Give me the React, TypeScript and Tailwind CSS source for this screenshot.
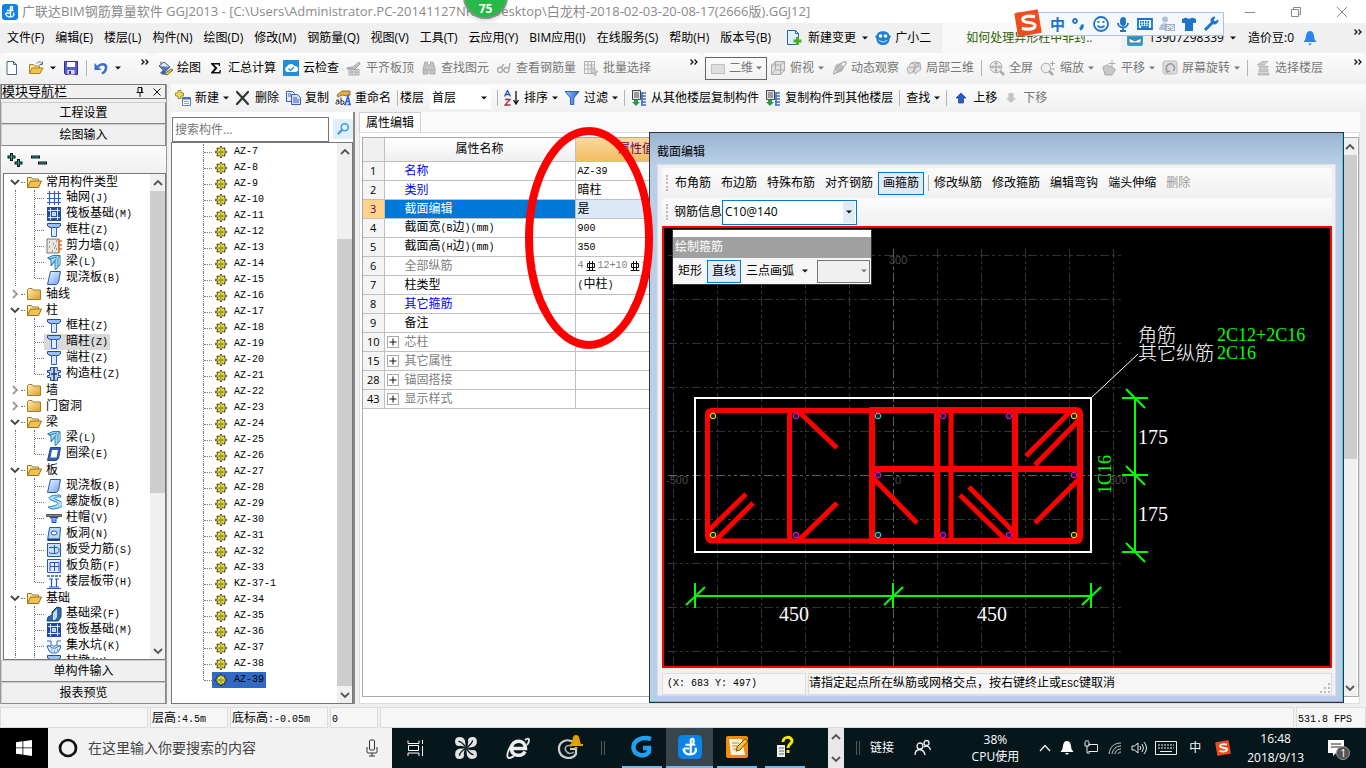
import React from "react";
import type { ReactNode } from "react";

const art: Record<string, ReactNode> = {
  app: (
    <>
      <rect width="16" height="16" rx="3" fill="#0a84e8" />
      <path d="M8.500 12.500V3.500q0-1 1-1t1 1.500-1 1.500M5 6.500h6.500M4 9h3.500M11.500 8.500c1.500 3-1 4.500-3.500 4.500S4 12 3.500 9" fill="none" stroke="#fff" strokeWidth="1.400" />
    </>
  ),
  page: <path d="M3 1.500h6.500l3 3v10H3zM9.500 1.500v3h3" fill="#fff" stroke="#50658c" />,
  folderOpen: (
    <>
      <path d="M1.500 13V3.500h4l1 1.500h6v2" fill="#fbe9a0" stroke="#9a7a2c" />
      <path d="M1.500 13.500 4.500 7h11l-3 6.500z" fill="#f3c14c" stroke="#9a6f1e" />
    </>
  ),
  fileOpen: (
    <>
      <path d="M1.500 13V4.500h4l1 1.500h5v2" fill="#fbe9a0" stroke="#b07f24" />
      <path d="M1.500 13.500 4 8h11l-3 5.500z" fill="#f3c14c" stroke="#b07f24" />
      <path d="M8.500 3.500c2-2.500 4.500-2 5.500.5m.5-2.500v3h-3" fill="none" stroke="#50708c" />
    </>
  ),
  folder: <path d="M1.500 13.500v-10l1-1h3.500l1 1.500h7.500v9.500z" fill="url(#gold)" stroke="#a87d28" />,
  save: (
    <>
      <path d="M1.500 1.500h13v13h-12l-1-1z" fill="#5a5fd0" stroke="#2c2f90" />
      <path d="M4 2h8v5H4z" fill="#fff" />
      <path d="M4.500 10h7v4.500h-7z" fill="#dcdcec" />
      <path d="M6 11h2v3H6z" fill="#2c2f90" />
    </>
  ),
  undo: (
    <>
      <path d="M5 6.500c4-4 9-2 8 2-.4 2.500-2 4-4 5" fill="none" stroke="#3d6fd0" strokeWidth="2.500" />
      <path d="M1.500 3v7h7z" fill="#3d6fd0" />
    </>
  ),
  paint: (
    <>
      <path d="m2 6 5-4 6 5-5 5z" fill="#e6ecf5" stroke="#44597c" />
      <path d="M4 4V1.500" stroke="#44597c" />
      <path d="M2 6 8 6.500 13 7 8 12z" fill="#5a78b8" />
      <path d="m7 14 7-5 2 1-6 5z" fill="#eac53c" stroke="#6a6a40" />
      <path d="m3 13 3-3 3 3-3 2z" fill="#3e63a8" />
    </>
  ),
  sigma: <path d="M3 3h9v3h-1l-.5-1.500H6l3.500 3.500L6 12h5l1-2h1l-.5 3.500H3v-1L6.800 8 3 4z" fill="#111" />,
  cloud: (
    <>
      <rect width="16" height="16" fill="#1e8fd8" />
      <path d="M4 12a3 3 0 0 1 0-5.500 4.200 4.200 0 0 1 7.500-.5A3 3 0 0 1 12.500 12z" fill="#fff" />
      <path d="m5.500 8.500 2 2 3.500-3.500" fill="none" stroke="#1e8fd8" strokeWidth="1.300" />
    </>
  ),
  slab: (
    <>
      <path d="m1 8 6-1 6-5 1 2-5 5H1z" fill="#c4c4c4" stroke="#a0a0a0" />
      <path d="M3 9.500h10V15H3zM6 9.500V15m4-5.500V15M3 12h10" fill="#ddd" stroke="#aaa" />
    </>
  ),
  binoc: <path d="M4 2h2.500v3h3V2H12l2 7v5H9v-4H7v4H2V9zM3 10h3m4 0h3" fill="#c4c4c4" stroke="#aaa" />,
  glasses: (
    <g fill="none" stroke="#a8a8a8" strokeWidth="1.300">
      <circle cx="4" cy="10" r="2.500" />
      <circle cx="10.500" cy="10" r="2.500" />
      <path d="M6.500 10H8M5 7.500 8 4m5 5 1-6" />
    </g>
  ),
  batch: (
    <>
      <path d="M1.500 1.500h10v12h-10zM1.500 5h10M1.500 9h10M5 1.500v12M8.500 1.500v12" fill="none" stroke="#b0b0b0" />
      <path d="m8 6 7 6-3 .5 1.500 2.500-1.500.5-1.500-2.500L8 14z" fill="#ccc" stroke="#999" strokeWidth=".6" />
    </>
  ),
  flat: <path d="M1.500 4.500h13v9h-13z" fill="#dedede" stroke="#c0c0c0" />,
  cube: (
    <>
      <path d="m1.500 5 4-3.500h9v9l-4 4h-9z" fill="#e2e2e2" stroke="#aaa" />
      <path d="M1.500 5h9v9.500M10.500 5l4-3.500M5.500 2v8h9M5.500 10l-4 4" fill="none" stroke="#aaa" />
    </>
  ),
  orbit: (
    <>
      <circle cx="8" cy="8" r="4.500" fill="#c0c0c0" />
      <path d="M3 14C1 11 12 0 15 2c1 2-6 10-12 12z" fill="none" stroke="#aaa" strokeWidth="1.300" />
    </>
  ),
  local3d: (
    <g fill="#e2e2e2" stroke="#aaa">
      <path d="m1 9 4-6 4 1-1 7-5 3z" />
      <path d="m9 4 5-1 1 6-6 5-1-3z" />
      <path d="m5 3 4-1 5 1M3 8l11-2M6 13l7-9" fill="none" />
    </g>
  ),
  full: (
    <>
      <circle cx="7" cy="7" r="5.800" fill="#eee" stroke="#aaa" />
      <path d="M7 2.500v9M2.500 7h9M5.500 4 7 2.500 8.500 4m-3 6L7 11.500 8.500 10M4 5.500 2.500 7 4 8.500m6-3L11.500 7 10 8.500" fill="none" stroke="#999" />
      <path d="m11 11 4 4" stroke="#aaa" strokeWidth="2.500" />
    </>
  ),
  zoom: (
    <>
      <circle cx="6" cy="8" r="4.800" fill="#eee" stroke="#aaa" />
      <path d="m9 11 4 4" stroke="#aaa" strokeWidth="2.500" />
      <path d="M12.500 1v5M10 3.500h5M11 9h4" stroke="#aaa" />
    </>
  ),
  pan: (
    <>
      <path d="M2 7c2-1 3-2 5-2l5 3 2 1c0 3-2 4-3 6H4c0-3-2-5-2-8z" fill="#c8c8c8" stroke="#aaa" />
      <path d="M11 0v7M7.500 3.500h7" stroke="#aaa" />
    </>
  ),
  rotate: (
    <>
      <rect x="1" y="1" width="14" height="13" rx="2" fill="#ddd" stroke="#bbb" />
      <path d="M5 10a4 4 0 1 1 6 1M4 9l1 3 3-1" fill="none" stroke="#999" strokeWidth="1.500" />
    </>
  ),
  floors: <path d="m2 5 5-3.500h6L9 5zM4 6h9v2H4zM4 9.500h9v2H4zM3 13h11v2H3z" fill="#ccc" stroke="#aaa" strokeWidth=".7" />,
  create: (
    <>
      <path d="M3 .5h3v2.500h2.500v3H6v2.500H3V6H.5V3H3z" fill="#f6dc50" stroke="#8a7a20" strokeWidth=".8" />
      <path d="M7.500 7.500h8v8h-8z" fill="#fff" stroke="#6080b0" />
      <path d="M7.500 7.500h8v2h-8z" fill="#3c6cc0" />
      <path d="M9 11.500h5M9 13.500h5" stroke="#90a8cc" />
    </>
  ),
  cross: <path d="m2 2 11 12M13 2 2 14" stroke="#333" strokeWidth="2.200" strokeLinecap="round" />,
  copy: (
    <g stroke="#3a62b0">
      <path d="M1.500 1.500h6l2 2v8h-8z" fill="#e4edfb" />
      <path d="M6.500 4.500h6l3 3v7h-9z" fill="#cfe0fa" />
      <path d="M3 4h3M3 6h3M8 8h4M8 10h6M8 12h6" />
    </g>
  ),
  rename: (
    <>
      <path d="m2 5 5-4h8v4l-3 1-5-1-4 2z" fill="#e2b23c" stroke="#7a5a1a" strokeWidth=".8" />
      <path d="M1 10.500q3-1.500 3 .5v3m0-2.500c-4 0-4 3-1.500 2.500L4 13M6 7.500v7q3 0 3-2t-3-2" fill="none" stroke="#333" />
      <path d="M9 14.500h2.500m1 0H16M10 14.500 13 6l2 8.500M11 11.500h3.500" fill="none" stroke="#3264c8" strokeWidth="1.500" />
    </>
  ),
  sort: (
    <>
      <path d="M.5 6.500 3.500.5l3 6M2 4.500h3.500" fill="none" stroke="#2c50b0" strokeWidth="1.300" />
      <path d="M1 9.500h5l-5 5.500h5.500" fill="none" stroke="#a03048" strokeWidth="1.300" />
      <path d="M12 1v12m-2.500-3 2.500 4 2.500-4" fill="none" stroke="#111" strokeWidth="1.300" />
    </>
  ),
  filter: <path d="M1 1.500h14L9.800 8v6.500H6.500V8z" fill="url(#blue)" stroke="#2e62c0" />,
  floorCopy: (
    <>
      <path d="M1.500.5h8v9h-8z" fill="#e4e4e4" stroke="#444" />
      <path d="M3 3h5M3 5h5M3 7h5" stroke="#555" />
      <path d="M3 9.500h4v2.500h2l-4 4-4-4h2z" fill="#2a9a48" />
      <path d="M11 3h4M10 6h5M10 9h5M10 12h5M10 15h5M11 2v13" stroke="#3c72c8" strokeWidth="1.600" />
    </>
  ),
  up: <path d="m8 3 5 5h-2.500v5h-5V8H3z" fill="#2a5cc8" stroke="#183c90" strokeWidth=".7" />,
  down: <path d="m8 13 5-5h-2.500V3h-5v5H3z" fill="#c4c4c4" />,
  newChange: (
    <>
      <path d="M1.500.5h8l3 3v11h-11z" fill="#dff0fc" stroke="#28689c" />
      <path d="M9.500.5v3h3" fill="none" stroke="#28689c" />
      <path d="M10 7h3v2.500h2.500v3H13V15h-3v-2.500H7.500v-3H10z" fill="#4cae22" />
    </>
  ),
  robot: (
    <>
      <path d="M2 5C2 0 14 0 14 5l2 1-1.500 3c0 8-13 8-13 0L0 6z" fill="#1f7fd0" />
      <circle cx="5.500" cy="6" r="1.800" fill="#fff" />
      <circle cx="10.500" cy="6" r="1.800" fill="#fff" />
      <path d="M4 10c2 2.500 6 2.500 8 0" fill="none" stroke="#bfe2ff" strokeWidth="1.200" />
    </>
  ),
  mail: (
    <>
      <rect width="16" height="16" rx="2" fill="#3a9ccc" />
      <path d="M2 8h12v5H2zl6 3 6-3" fill="#fff" stroke="#3a7898" />
    </>
  ),
  bell: (
    <>
      <path d="M8 1c4 0 4 5 4.500 8l2 3h-13l2-3C4 6 4 1 8 1z" fill="#2a86e8" />
      <path d="M6 13.500h4L8 15.500z" fill="#2a86e8" />
    </>
  ),
  search: (
    <>
      <circle cx="10" cy="6" r="4" fill="#eaf6ff" stroke="#3aa0e0" strokeWidth="1.800" />
      <path d="M7 9 2 14" stroke="#3aa0e0" strokeWidth="2.500" />
    </>
  ),
  grid: <path d="M3.500 1v14M8.500 1v14M12.500 1v14M1 3.500h14M1 8.500h14M1 12.500h14" fill="none" stroke="#2f5cc0" strokeWidth="1.200" />,
  raft: (
    <>
      <rect x="1" y="1" width="14" height="14" fill="#1f4ea0" />
      <path d="M2 4.500h12M2 11.500h12M4.500 2v12M11.500 2v12M6.500 6.500h3v3h-3z" stroke="#dce9fa" fill="#a8c4ec" />
    </>
  ),
  column: (
    <>
      <path d="M1.500 1.500h13V4L12 5.500H4L1.500 4z" fill="#9cc0f4" stroke="#1f4ea8" />
      <path d="M5.500 5.500h5v9h-5z" fill="#dcebff" stroke="#2f62c8" />
    </>
  ),
  wall: (
    <>
      <path d="M1 1h12v14H1z" fill="#e8e4e0" stroke="#777" />
      <path d="M3 4h1m3 2h1m2-3h1M3 9h1m4 1h1m-3 3h1m3-2h1M9 8h1" stroke="#555" />
      <path d="M13 1v14M13 3h3M13 7h3M13 11h3" stroke="#e07028" strokeWidth="1.400" />
    </>
  ),
  beam: (
    <>
      <path d="M1.500 4 7 1.500h7l-2 3v9l-3 2V7L5 12V6z" fill="#a8d8f4" stroke="#2880b8" />
      <path d="m3 5 8-2M12 4l2-2v9l-2 2M5 12l5-7" fill="none" stroke="#2880b8" />
    </>
  ),
  plate: <path d="M4.500 1.500h10l-2 11-2 2h-9z" fill="url(#blue2)" stroke="#2458b8" />,
  ring: (
    <>
      <path d="M4.500 1.500h10l-2 11-2 2h-9z" fill="#2f60b8" stroke="#1f4898" />
      <path d="M6 4h6l-1.500 7.500h-6z" fill="#fff" />
    </>
  ),
  struct: (
    <>
      <path d="M4.500 1.500h7v3h3v2h-2v3h2v2h-3v3h-7v-3h-3v-2h2v-3h-2v-2h3z" fill="#b8d0f4" stroke="#1f4898" />
      <path d="M8 2v12M5 8h6" stroke="#1f3878" strokeWidth="1.500" />
    </>
  ),
  spiral: <path d="M14 1C3 1 1 4 5 6l5 2c4 1 1 4-8 5l3 2c12 0 14-5 9-8L9 5c-2-1 1-2 6-2z" fill="#a8dcfa" stroke="#2a80c0" />,
  cap: (
    <>
      <path d="M.5 4.500h15v2H.5z" fill="#888" stroke="#555" />
      <path d="M4 7.500h8l-2 2v3H6v-3z" fill="#78a8f0" stroke="#1f4ea8" />
    </>
  ),
  hole: (
    <>
      <path d="M3.500 1.500h11l-1 13h-12z" fill="#bcd6fa" stroke="#2458b8" />
      <ellipse cx="8" cy="7" rx="3" ry="2" fill="#fff" stroke="#2458b8" />
      <path d="M2 13.500h12" stroke="#183c80" strokeWidth="2" />
    </>
  ),
  rebar: (
    <>
      <path d="M1.500 1.500h13v13h-13z" fill="#c8dcfa" stroke="#2458b8" />
      <path d="M3 5.500h8q2 0 2 3t-5 3-5-1M8.500 3v9" fill="none" stroke="#2458b8" />
    </>
  ),
  neg: (
    <>
      <path d="M1.500 1.500h13v13h-13z" fill="#e2ecfc" stroke="#2458b8" />
      <path d="M4 8.500h9M8.500 4v9M4 13V4.500h9V13" fill="none" stroke="#2458b8" />
    </>
  ),
  band: (
    <>
      <path d="M1 2h14" stroke="#2458b8" strokeWidth="1.500" strokeDasharray="3 1" />
      <path d="M3 5h4M9 5h4M5.500 5v8m5-8v8M3 13h10M1 14.500h14" stroke="#2458b8" strokeWidth="1.200" />
    </>
  ),
  fbeam: (
    <>
      <path d="m1 15 1-4 4-2V6l5-5 4 1v9l-3 4z" fill="#2f6cb0" stroke="#183c70" />
      <path d="m7 7 4-4v8l-2 3H7z" fill="#c4e0fa" />
    </>
  ),
  pit: (
    <>
      <path d="M1 3h4v4l2 1h2l2-1V3h4M1 8h4m6 0h4" fill="none" stroke="#2a68c0" />
      <path d="M1 8h3l2 2h4l2-2h3l-2 5-3 2H6l-3-2z" fill="#d4e8fc" stroke="#2a68c0" />
      <path d="M5 12h1m2 1h1m2-1h1" stroke="#2a68c0" />
    </>
  ),
  gear: (
    <>
      <path d="M8 1.500v13M1.500 8h13M3.500 3.500l9 9m0-9-9 9" stroke="#222" strokeWidth="2.600" />
      <circle cx="8" cy="8" r="5" fill="#222" />
      <path d="M8 2.500v11M2.500 8h11M4.200 4.200l7.600 7.600m0-7.600-7.600 7.600" stroke="#f4ec30" strokeWidth="1.400" />
      <circle cx="8" cy="8" r="3.600" fill="none" stroke="#f4ec30" strokeWidth="1.200" />
      <circle cx="8" cy="8" r="1.300" fill="#fff" stroke="#222" strokeWidth=".7" />
    </>
  ),
  sogou: (
    <>
      <path d="m1 3 12-2 2 12-12 2z" fill="#f04c1c" stroke="#f04c1c" strokeWidth="1.500" strokeLinejoin="round" />
      <path d="M12 4.500c-4-1-7 0-7 1.500 0 2.500 7 1 7 3.500 0 2-4 2.500-7.500 1.500" fill="none" stroke="#fff" strokeWidth="1.800" />
    </>
  ),
};

function Icon({ name, className = "size-4" }: { name: string; className?: string }) {
  return (
    <svg viewBox="0 0 16 16" className={`shrink-0 ${className}`} aria-hidden="true">
      {art[name]}
    </svg>
  );
}

const Caret = ({ dim = false }: { dim?: boolean }) => (
  <svg viewBox="0 0 6 4" className="h-1 w-1.5 shrink-0" aria-hidden="true">
    <path d="M0 .5h6L3 3.500z" fill={dim ? "#777" : "#111"} />
  </svg>
);

const Sep = () => <span className="h-4 w-px shrink-0 bg-[#b4b4b4]" />;

const More = () => (
  <button aria-label="更多" className="mb-3 flex shrink-0">
    <svg viewBox="0 0 8 6" className="h-1.5 w-2">
      <path d="m.5.5 2.500 2.500L.5 5.500m4-5L7 3 4.500 5.500" fill="none" stroke="#111" strokeWidth="1.300" />
    </svg>
  </button>
);

function Tool({ icon, label, off = false, caret = false }: { icon?: string; label: string; off?: boolean; caret?: boolean }) {
  return (
    <button className={`flex shrink-0 items-center gap-1 ${off ? "text-[#777]" : "text-black"}`}>
      {icon && <Icon name={icon} />}
      <span>{label}</span>
      {caret && <Caret dim={off} />}
    </button>
  );
}

/* Latin runs are set in a half-width mono face beside the full-width characters. */
function Mixed({ text }: { text: string }) {
  return (
    <>
      {text.split(/([\x20-\x7e]+)/).map((part, i) =>
        i % 2 ? (
          <span key={i} className="whitespace-pre text-[10px] [font-family:'Liberation_Mono',monospace]">
            {part}
          </span>
        ) : (
          part
        ),
      )}
    </>
  );
}

function Chevron({ dir, className = "" }: { dir: "up" | "down" | "right"; className?: string }) {
  const d = dir === "up" ? "M1 7 5 3l4 4" : dir === "down" ? "m1 3 4 4 4-4" : "m3 1 4 4-4 4";
  return (
    <svg viewBox="0 0 10 10" className={`size-2.5 shrink-0 ${className}`} aria-hidden="true">
      <path d={d} fill="none" stroke="currentColor" strokeWidth="1.800" />
    </svg>
  );
}

function ScrollRail({ before, thumb, after }: { before: string; thumb: string; after: string }) {
  return (
    <div className="flex w-[15px] shrink-0 flex-col bg-[#f0f0f0] text-[#555]">
      <button aria-label="向上滚动" className="flex h-[17px] items-center justify-center">
        <Chevron dir="up" />
      </button>
      <div className="flex min-h-0 flex-1 flex-col">
        <div className={before} />
        <div className={`bg-[#cdcdcd] ${thumb}`} />
        <div className={after} />
      </div>
      <button aria-label="向下滚动" className="flex h-[17px] items-center justify-center">
        <Chevron dir="down" />
      </button>
    </div>
  );
}

const menus = ["文件(F)", "编辑(E)", "楼层(L)", "构件(N)", "绘图(D)", "修改(M)", "钢筋量(Q)", "视图(V)", "工具(T)", "云应用(Y)", "BIM应用(I)", "在线服务(S)", "帮助(H)", "版本号(B)"];

type Group = { name: string; kids?: [string, string][] };
const tree: Group[] = [
  { name: "常用构件类型", kids: [["grid", "轴网(J)"], ["raft", "筏板基础(M)"], ["column", "框柱(Z)"], ["wall", "剪力墙(Q)"], ["beam", "梁(L)"], ["plate", "现浇板(B)"]] },
  { name: "轴线" },
  { name: "柱", kids: [["column", "框柱(Z)"], ["column", "暗柱(Z)"], ["column", "端柱(Z)"], ["struct", "构造柱(Z)"]] },
  { name: "墙" },
  { name: "门窗洞" },
  { name: "梁", kids: [["beam", "梁(L)"], ["ring", "圈梁(E)"]] },
  { name: "板", kids: [["plate", "现浇板(B)"], ["spiral", "螺旋板(B)"], ["cap", "柱帽(V)"], ["hole", "板洞(N)"], ["rebar", "板受力筋(S)"], ["neg", "板负筋(F)"], ["band", "楼层板带(H)"]] },
  { name: "基础", kids: [["fbeam", "基础梁(F)"], ["raft", "筏板基础(M)"], ["pit", "集水坑(K)"], ["column", "柱墩(Y)"]] },
];

const members = [...Array.from({ length: 27 }, (_, i) => `AZ-${i + 7}`), "KZ-37-1", ...Array.from({ length: 6 }, (_, i) => `AZ-${i + 34}`)];

const props: { no: number; name: string; value?: string; tone?: string; group?: boolean }[] = [
  { no: 1, name: "名称", value: "AZ-39", tone: "text-[#0000ff]" },
  { no: 2, name: "类别", value: "暗柱", tone: "text-[#0000ff]" },
  { no: 3, name: "截面编辑", value: "是", tone: "text-white" },
  { no: 4, name: "截面宽(B边)(mm)", value: "900" },
  { no: 5, name: "截面高(H边)(mm)", value: "350" },
  { no: 6, name: "全部纵筋", tone: "text-[#808080]" },
  { no: 7, name: "柱类型", value: "(中柱)" },
  { no: 8, name: "其它箍筋", tone: "text-[#0000ff]" },
  { no: 9, name: "备注" },
  { no: 10, name: "芯柱", tone: "text-[#808080]", group: true },
  { no: 15, name: "其它属性", tone: "text-[#808080]", group: true },
  { no: 28, name: "锚固搭接", tone: "text-[#808080]", group: true },
  { no: 43, name: "显示样式", tone: "text-[#808080]", group: true },
];

function TitleBar() {
  return (
    <header className="flex h-[23px] shrink-0 items-center bg-white pl-0.5 text-[#8a8a8a]">
      <Icon name="app" />
      <h1 className="ml-1 flex-1 truncate whitespace-pre text-[13px]">广联达BIM钢筋算量软件 GGJ2013 - [C:\Users\Administrator.PC-20141127NRHI\Desktop\白龙村-2018-02-03-20-08-17(2666版).GGJ12]</h1>
      <div className="flex gap-[34px] pr-[18px]">
        <button aria-label="最小化">
          <svg viewBox="0 0 12 12" className="size-3"><path d="M1 6.500h10" stroke="#888" /></svg>
        </button>
        <button aria-label="还原">
          <svg viewBox="0 0 12 12" className="size-3" fill="none" stroke="#888"><path d="M1.500 3.500h7v7h-7zM3.500 3V1.500h7v7H9" /></svg>
        </button>
        <button aria-label="关闭">
          <svg viewBox="0 0 12 12" className="size-3"><path d="m1 1 10 10M11 1 1 11" stroke="#888" /></svg>
        </button>
      </div>
    </header>
  );
}

function MenuBar() {
  return (
    <nav className="flex h-[30px] shrink-0 items-center gap-[11px] bg-[#f0f0f0] pl-[7px] pr-1">
      {menus.map((m) => (
        <button key={m} className="shrink-0">{m}</button>
      ))}
      <button className="ml-1 flex shrink-0 items-center gap-1.5">
        <Icon name="newChange" />
        新建变更
        <Caret />
      </button>
      <button className="-ml-1 flex shrink-0 items-center gap-1">
        <Icon name="robot" />
        广小二
      </button>
      <div className="flex h-full flex-1 items-center">
        <a href="#tip" className="h-full flex-1 rounded-sm bg-[#f8f8f8] pl-6 leading-[30px] text-[#2f6000]">如何处理异形柱中非封..</a>
        <button className="ml-1.5 flex items-center gap-1.5">
          <Icon name="mail" />
          13907298339
          <Caret />
        </button>
        <button className="ml-3">造价豆:0</button>
        <button aria-label="通知" className="ml-2 mr-9"><Icon name="bell" /></button>
        <More />
      </div>
    </nav>
  );
}

function MainTools() {
  return (
    <div className="flex h-[30px] shrink-0 items-center bg-[#f0f0f0]">
      <div className="flex h-full w-[152px] shrink-0 items-center rounded bg-linear-to-b from-[#fcfcfc] to-[#f0f0f0] pl-1">
        <button aria-label="新建工程"><Icon name="page" /></button>
        <button aria-label="打开" className="ml-2 flex items-center gap-1.5"><Icon name="fileOpen" /><Caret /></button>
        <button aria-label="保存" className="mx-[7px]"><Icon name="save" /></button>
        <Sep />
        <button aria-label="撤销" className="ml-1.5 mr-5 flex items-center gap-1.5"><Icon name="undo" /><Caret /></button>
        <More />
      </div>
      <div className="flex h-full w-[550px] shrink-0 items-center gap-[7px] rounded bg-linear-to-b from-[#fcfcfc] to-[#f0f0f0] pl-[5px] pr-1">
        <Tool icon="paint" label="绘图" />
        <Tool icon="sigma" label="汇总计算" />
        <Tool icon="cloud" label="云检查" />
        <Tool icon="slab" label="平齐板顶" off />
        <Tool icon="binoc" label="查找图元" off />
        <Tool icon="glasses" label="查看钢筋量" off />
        <Tool icon="batch" label="批量选择" off />
        <span className="flex-1" />
        <More />
      </div>
      <div className="flex h-full flex-1 items-center gap-[7px] rounded bg-linear-to-b from-[#fcfcfc] to-[#f0f0f0] pl-[3px] pr-1">
        <button className="-mr-1 flex h-[23px] w-[62px] items-center justify-between border border-[#666] px-1 text-[#777]">
          <Icon name="flat" />
          二维
          <Caret dim />
        </button>
        <Tool icon="cube" label="俯视" off caret />
        <Tool icon="orbit" label="动态观察" off />
        <Tool icon="local3d" label="局部三维" off />
        <Sep />
        <Tool icon="full" label="全屏" off />
        <Tool icon="zoom" label="缩放" off caret />
        <Tool icon="pan" label="平移" off caret />
        <Tool icon="rotate" label="屏幕旋转" off caret />
        <Sep />
        <Tool icon="floors" label="选择楼层" off />
        <span className="flex-1" />
        <More />
      </div>
    </div>
  );
}

function MemberTools() {
  return (
    <div className="flex h-[27px] shrink-0 items-center gap-1.5 bg-linear-to-b from-[#fcfcfc] to-[#f0f0f0] pl-1">
      <Tool icon="create" label="新建" caret />
      <Tool icon="cross" label="删除" />
      <Tool icon="copy" label="复制" />
      <Tool icon="rename" label="重命名" />
      <Sep />
      <label className="-ml-1 flex items-center gap-1.5">
        楼层
        <span className="relative flex items-center">
          <select defaultValue="首层" className="h-[23px] w-[61px] appearance-none bg-white pl-0.5">
            <option>首层</option>
          </select>
          <span className="pointer-events-none absolute right-1"><Caret /></span>
        </span>
      </label>
      <Sep />
      <Tool icon="sort" label="排序" caret />
      <Tool icon="filter" label="过滤" caret />
      <Sep />
      <Tool icon="floorCopy" label="从其他楼层复制构件" />
      <Tool icon="floorCopy" label="复制构件到其他楼层" />
      <Sep />
      <Tool label="查找" caret />
      <Sep />
      <Tool icon="up" label="上移" />
      <Tool icon="down" label="下移" off />
    </div>
  );
}

const NavButton = ({ children }: { children: ReactNode }) => (
  <button className="h-[22px] shrink-0 border border-t-[#ccc] border-r-[#888] border-b-[#888] border-l-[#ccc] bg-[#f0f0f0]">{children}</button>
);

function NavPanel() {
  return (
    <aside className="flex w-[167px] shrink-0 flex-col border-x border-[#999] bg-[#f0f0f0]">
      <div className="flex h-[15px] shrink-0 items-center border border-[#777] pr-1 text-[13px] leading-[13px]">
        <span className="flex-1">模块导航栏</span>
        <button aria-label="固定" className="mr-[9px]">
          <svg viewBox="0 0 8 10" className="h-2.5 w-2"><path d="M2 .5h4V5M2 .5V5M.5 5.500h7M4 6v4M5.500 1v4" fill="none" stroke="#111" /></svg>
        </button>
        <button aria-label="关闭导航栏">
          <svg viewBox="0 0 8 8" className="size-2"><path d="m.5.5 7 7m0-7-7 7" stroke="#111" /></svg>
        </button>
      </div>
      <div className="mt-[3px] flex min-h-0 flex-1 flex-col">
        <NavButton>工程设置</NavButton>
        <NavButton>绘图输入</NavButton>
        <div className="flex h-[27px] shrink-0 items-center gap-2 bg-linear-to-b from-[#fcfcfc] to-[#f0f0f0] pl-1.5">
          <button aria-label="全部展开">
            <svg viewBox="0 0 16 16" className="size-4" fill="none"><path d="M4.500 1v8M.5 5h8M11.500 7v8m-4-4h8" stroke="#111" strokeWidth="3" /><path d="M4.500 2v6M1.500 5h6m4 3v6m-3-3h6" stroke="#10b0a0" /></svg>
          </button>
          <button aria-label="全部折叠">
            <svg viewBox="0 0 16 16" className="size-4" fill="none"><path d="M0 5h9M7 11h9" stroke="#111" strokeWidth="3" /><path d="M1 5h7m0 6h7" stroke="#10b0a0" /></svg>
          </button>
        </div>
        <div className="ml-0.5 flex min-h-0 flex-1 overflow-hidden border border-[#777] bg-white">
          <ul className="min-w-0 flex-1 overflow-hidden">
            {tree.map((g) => (
              <li key={g.name}>
                <button className="flex h-4 items-center pl-1.5 leading-4">
                  <Chevron dir={g.kids ? "down" : "right"} className={g.kids ? "text-[#444]" : "text-[#999]"} />
                  <span className="mx-px w-1 border-t border-dotted border-[#777]" />
                  <Icon name={g.kids ? "folderOpen" : "folder"} />
                  <span className="ml-1">{g.name}</span>
                </button>
                {g.kids && (
                  <ul>
                    {g.kids.map(([icon, label], i) => (
                      <li key={label} className="flex h-4 items-center pl-[11px]">
                        <span className="h-full w-[19px] shrink-0 border-l border-dotted border-[#777]" />
                        <span className={`shrink-0 self-start border-l border-dotted border-[#777] ${i === g.kids!.length - 1 ? "h-1/2" : "h-full"}`} />
                        <span className="w-[9px] shrink-0 border-t border-dotted border-[#777]" />
                        <button className={`flex h-4 items-center gap-1 whitespace-nowrap px-0.5 leading-4 ${label === "暗柱(Z)" ? "bg-[#d9d9d9]" : ""}`}>
                          <Icon name={icon} />
                          <span><Mixed text={label} /></span>
                        </button>
                      </li>
                    ))}
                  </ul>
                )}
              </li>
            ))}
          </ul>
          <ScrollRail before="h-0" thumb="h-[67%]" after="flex-1" />
        </div>
        <NavButton>单构件输入</NavButton>
        <NavButton>报表预览</NavButton>
      </div>
    </aside>
  );
}

function MemberPanel() {
  return (
    <section className="flex w-[184px] shrink-0 flex-col border-r-2 border-[#888] bg-[#f0f0f0]">
      <div className="flex h-[30px] shrink-0 items-center gap-1 bg-white pl-px pt-1">
        <input aria-label="搜索构件" placeholder="搜索构件..." className="h-[25px] w-[157px] border border-[#777] bg-white px-0.5 text-xs outline-none placeholder:text-[#777]" />
        <button aria-label="搜索" className="flex size-5 items-center justify-center bg-[#dff0fc]"><Icon name="search" className="size-3.5" /></button>
      </div>
      <div className="flex min-h-0 flex-1 overflow-hidden border border-[#777] bg-white">
        <ul className="flex-1 overflow-hidden pt-px">
          {members.map((m, i) => (
            <li key={m} className="flex h-4 items-center pl-[31px]">
              <span className={`self-start border-l border-dotted border-[#777] ${i === members.length - 1 ? "h-1/2" : "h-full"}`} />
              <span className="w-2 border-t border-dotted border-[#777]" />
              <button className={`flex h-4 items-center gap-1.5 px-0.5 leading-4 ${m === "AZ-39" ? "bg-[#316ac5]" : ""}`}>
                <Icon name="gear" className="size-3.5" />
                <Mixed text={m} />
              </button>
            </li>
          ))}
        </ul>
        <ScrollRail before="h-[15%]" thumb="flex-1" after="h-0" />
      </div>
    </section>
  );
}

function PropertyPanel() {
  return (
    <section className="flex min-w-0 flex-1 flex-col bg-[#f0f0f0] pl-0.5 pr-1.5">
      <div className="flex h-[21px] shrink-0 items-end border-b border-[#dcdcdc] bg-[#fafafa]">
        <h2 className="h-full border border-b-0 border-[#d0d0d0] bg-white px-1.5 leading-5">属性编辑</h2>
      </div>
      <div className="flex min-h-0 flex-1 border border-t-0 border-[#dcdcdc] bg-white p-1 pb-1.5 pl-0.5 pr-0">
        <div className="flex min-w-0 flex-1 overflow-hidden border border-[#aaa] bg-white">
          <div className="min-w-0 flex-1">
            <table className="table-fixed border-collapse text-left">
              <colgroup>
                <col className="w-[21px]" />
                <col className="w-[191px]" />
                <col className="w-[122px]" />
              </colgroup>
              <thead>
                <tr className="h-[23px] text-center">
                  <th className="border-b border-r border-[#c0c0c0] bg-[#f0f0f0] p-0" />
                  <th className="border-b border-r border-[#c0c0c0] bg-linear-to-b from-white to-[#eee] p-0 font-normal">属性名称</th>
                  <th className="border-b border-r border-[#c0c0c0] bg-linear-to-b from-[#fad89c] to-[#f2bd60] p-0 font-normal text-[#600060]">属性值</th>
                </tr>
              </thead>
              <tbody>
                {props.map((p) => {
                  const on = p.no === 3;
                  return (
                    <tr key={p.no} className="h-[19px] leading-[18px]">
                      <td className={`border-b border-r border-[#c0c0c0] p-0 text-center text-[11px] leading-[18px] ${on ? "bg-[#ffd488] text-[#600060]" : "bg-[#f4f4f4]"}`}>{p.no}</td>
                      <td className={`border-b border-r border-[#c0c0c0] p-0 ${p.tone ?? "text-black"} ${on ? "bg-[#0078d7]" : ""}`}>
                        <span className="flex h-[18px] items-center pl-0.5">
                          <span className="flex w-[18px] items-center">
                            {p.group && (
                              <button aria-label={`展开${p.name}`} className="size-3 border border-[#aaa] bg-white">
                                <svg viewBox="0 0 10 10" className="size-2.5"><path d="M5 1.500v7M1.500 5h7" stroke="#111" /></svg>
                              </button>
                            )}
                          </span>
                          <span><Mixed text={p.name} /></span>
                        </span>
                      </td>
                      <td className={`whitespace-nowrap border-b border-r border-[#c0c0c0] p-0 pl-0.5 ${on ? "bg-[#dbe9f7]" : ""} ${p.no === 6 ? "text-[#808080]" : "text-black"}`}>
                        {p.no === 6 ? (
                          <span className="flex h-[18px] items-center gap-0.5 text-[10px] [font-family:'Liberation_Mono',monospace]">
                            4<RebarMark />12+10<RebarMark />16
                          </span>
                        ) : (
                          <span className="flex h-[18px] items-center"><span><Mixed text={p.value ?? ""} /></span></span>
                        )}
                      </td>
                    </tr>
                  );
                })}
              </tbody>
            </table>
          </div>
          <ScrollRail before="h-0" thumb="h-[58%]" after="flex-1" />
          <span className="w-px" />
        </div>
      </div>
    </section>
  );
}

const RebarMark = () => (
  <svg viewBox="0 0 10 10" className="size-2.5 shrink-0" fill="none" stroke="#111" aria-label="三级钢">
    <path d="M.5 9.500h9M1.500 2.500h7v4h-7zM3.500 0v9M6.500 0v9" />
  </svg>
);

const vLines = [673, 717, 761, 805, 849, 893, 937, 981, 1025, 1069, 1113];
const hLines = [255, 299, 343, 387, 431, 475, 519, 563, 607, 651];
const bars: [number, number, string][] = [
  [713, 416, "#ff0"], [713, 535, "#ff0"], [1074, 416, "#ff0"], [1074, 535, "#ff0"],
  [796, 416, "#f0f"], [796, 535, "#f0f"], [943, 416, "#f0f"], [943, 535, "#f0f"],
  [1009, 416, "#f0f"], [1009, 535, "#f0f"], [878, 475, "#f0f"], [1074, 475, "#f0f"],
  [878, 416, "#0ff"], [878, 535, "#0ff"],
];

function SectionDrawing() {
  return (
    <svg viewBox="664 228 666 438" className="block size-full" role="img" aria-label="柱截面配筋图">
      <g strokeDasharray="9 3 3 3 3 3" strokeWidth="1">
        {vLines.map((x) => (
          <path key={x} d={`M${x + 0.5} 249V666`} stroke={x === 893 ? "#606060" : "#333"} />
        ))}
        {hLines.map((y) => (
          <path key={y} d={`M668 ${y + 0.5}H1121`} stroke={y === 475 ? "#606060" : "#333"} />
        ))}
      </g>
      <g fill="#4a4a4a" fontSize="11" fontFamily="Liberation Sans, sans-serif">
        <text x="889" y="264">300</text>
        <text x="666" y="484">-500</text>
        <text x="895" y="484">0</text>
        <text x="1109" y="484">300</text>
      </g>
      <rect x="695" y="398" width="396" height="154" fill="none" stroke="#fff" strokeWidth="2" />
      <path d="M1091 398 1138 354" stroke="#fff" />
      <g fill="none" stroke="#f00">
        <path d="M875 410.500H712q-4.500 0-4.500 4.500v121q0 5 5 5H875M789.500 410v131M951 410v131" strokeWidth="5" />
        <path d="M872 410h204q4 0 4 4v123q0 4-4 4H872zM872 469h208M937 410v131M1015 410v131" strokeWidth="6" />
        <path d="M798 411 837 448M837 503 798 541M746 494 708 531M753 503 715 541M874 479 917 523M960 495 1007 541M969 487 1014 532M1026 456 1070 412M1035 465 1079 420M1035 523 1079 479" strokeWidth="5" />
      </g>
      {bars.map(([x, y, c]) => (
        <circle key={`${x}-${y}`} cx={x} cy={y} r="2.800" fill="#222" stroke={c} strokeWidth="1" />
      ))}
      <g fill="none" stroke="#0f0" strokeWidth="2">
        <path d="M695 596H1091M695 583v25M893 583v25M1091 583v25M686 605l19-18M884 605l19-18M1082 605l19-18" />
        <path d="M1135 398V552M1122 398h26M1122 475h26M1122 552h26M1126 389l19 19M1126 466l19 19M1126 543l19 19" />
      </g>
      <g fill="#fff" fontFamily="'Liberation Serif', 'Noto Sans CJK SC', serif">
        <g fontSize="20">
          <text x="779" y="621">450</text>
          <text x="977" y="621">450</text>
          <text x="1138" y="444">175</text>
          <text x="1138" y="521">175</text>
        </g>
        <g fontSize="19" fontWeight="300">
          <text x="1138" y="342">角筋</text>
          <text x="1138" y="360">其它纵筋</text>
        </g>
        <g fontSize="18" fill="#0f0">
          <text x="1217" y="341">2C12+2C16</text>
          <text x="1217" y="359">2C16</text>
          <text transform="translate(1111 494) rotate(-90)">1C16</text>
        </g>
      </g>
    </svg>
  );
}

const Grip = () => <span className="h-4 shrink-0 border-l-2 border-dotted border-[#bbb]" />;
const flatBtn = "h-[23px] shrink-0 border border-transparent px-1";
const flatOn = "h-[23px] shrink-0 border border-[#0078d7] bg-[#dfebf7] px-1";

function SectionDialog() {
  return (
    <div role="dialog" aria-label="截面编辑" className="absolute left-[649px] top-[132px] flex h-[571px] w-[695px] flex-col border border-[#333] bg-[#b9cfe8] px-[7px] pb-1.5 shadow-[inset_-1px_-1px_#40d0f0]">
      <div className="-mx-[7px] mr-[-6px] h-[31px] shrink-0 bg-linear-to-b from-[#9ab4d0] to-[#b9cfe8] pl-[7px] pt-1 leading-[30px]">截面编辑</div>
      <div className="flex min-h-0 flex-1 flex-col border border-[#ddd] bg-[#f0f0f0] px-[3px] pl-1 pt-[3px]">
        <div className="flex h-[30px] shrink-0 items-center rounded bg-linear-to-b from-[#fcfcfc] to-[#f0f0f0] pl-1">
          <Grip />
          <div className="flex items-center pl-0.5">
            {["布角筋", "布边筋", "特殊布筋", "对齐钢筋"].map((t) => (
              <button key={t} className={flatBtn}>{t}</button>
            ))}
            <button className={flatOn}>画箍筋</button>
          </div>
          <span className="w-1" />
          <Sep />
          {["修改纵筋", "修改箍筋", "编辑弯钩", "端头伸缩"].map((t) => (
            <button key={t} className={flatBtn}>{t}</button>
          ))}
          <button className={`${flatBtn} text-[#999]`}>删除</button>
        </div>
        <div className="flex h-7 shrink-0 items-center rounded bg-linear-to-b from-[#fcfcfc] to-[#f0f0f0] pl-1">
          <Grip />
          <label htmlFor="rebar" className="ml-1.5">钢筋信息</label>
          <span className="flex h-[25px] w-[135px] items-center border border-[#0078d7] bg-white pr-px">
            <input id="rebar" defaultValue="C10@140" className="min-w-0 flex-1 px-0.5 outline-none" />
            <button aria-label="选择钢筋" className="flex h-[21px] w-3 items-center justify-center bg-[#dfebf7]"><Caret /></button>
          </span>
        </div>
        <div className="relative min-h-0 flex-1 border-2 border-[#f00] bg-black">
          <SectionDrawing />
          <div className="absolute left-2 top-px w-[200px] border border-[#333] bg-white">
            <div className="mt-[7px] h-[21px] bg-[#a0a0a0] px-0.5 leading-5 text-white">绘制箍筋</div>
            <div className="flex h-[26px] items-center bg-[#f6f6f6]">
              <button className={flatBtn}>矩形</button>
              <button className={flatOn}>直线</button>
              <button className={`${flatBtn} mr-1 flex items-center gap-2`}>三点画弧<Caret /></button>
              <button aria-label="弧半径" className="flex h-[23px] flex-1 items-center justify-end border border-[#777] bg-[#f0f0f0] pr-0.5"><Caret dim /></button>
              <span className="w-px" />
            </div>
          </div>
        </div>
        <div className="mt-[5px] flex h-[22px] shrink-0 gap-0.5 leading-5">
          <span className="flex w-[144px] items-center border border-[#dcdcdc] bg-[#f6f6f6] pl-1"><Mixed text="(X: 683 Y: 497)" /></span>
          <span className="flex flex-1 items-center justify-between border border-[#dcdcdc] bg-[#f6f6f6]">
            <span><Mixed text="请指定起点所在纵筋或网格交点，按右键终止或ESC键取消" /></span>
            <svg viewBox="0 0 12 12" className="size-3 self-end" fill="#bbb"><path d="M9 1h2v2H9zM9 5h2v2H9zM5 5h2v2H5zM9 9h2v2H9zM5 9h2v2H5zM1 9h2v2H1z" /></svg>
          </span>
        </div>
      </div>
    </div>
  );
}

function StatusBar() {
  const cell = "border border-[#dcdcdc] bg-[#f6f6f6] pl-px";
  return (
    <footer className="flex h-[21px] shrink-0 gap-0.5 bg-[#f0f0f0] leading-[19px]">
      <span className={`${cell} w-[148px]`} />
      <span className={`${cell} w-[78px]`}><Mixed text="层高:4.5m" /></span>
      <span className={`${cell} w-[98px]`}><Mixed text="底标高:-0.05m" /></span>
      <span className={`${cell} w-[48px]`}><Mixed text="0" /></span>
      <span className={`${cell} flex-1`} />
      <span className={`${cell} w-[70px]`}><Mixed text="531.8 FPS" /></span>
    </footer>
  );
}

function Taskbar() {
  const slot = "flex h-full items-center justify-center";
  return (
    <div className="flex h-10 shrink-0 items-center bg-[#06171c] text-white">
      <button aria-label="开始" className={`${slot} w-12 bg-black`}>
        <svg viewBox="0 0 16 16" className="size-4" fill="#fff"><path d="M0 2.200 6.500 1.300v6.200H0zM7.300 1.200 16 0v7.500H7.300zM0 8.300h6.500v6.300L0 13.700zM7.300 8.300H16V16l-8.700-1.200z" /></svg>
      </button>
      <div className="flex h-full w-[344px] items-center gap-2.5 bg-[#f2f2f2] px-2.5 text-[#333]">
        <svg viewBox="0 0 22 22" className="size-5"><circle cx="11" cy="11" r="8.800" fill="none" stroke="#111" strokeWidth="3" /></svg>
        <input aria-label="搜索" placeholder="在这里输入你要搜索的内容" className="min-w-0 flex-1 text-sm outline-none placeholder:text-[#444]" />
        <svg viewBox="0 0 12 18" className="mr-1 h-[18px] w-3" fill="none" stroke="#333"><rect x="3.500" y="1" width="5" height="10" rx="1" /><path d="M1 8v5q0 1 1 1h8q1 0 1-1V8M6 14v3M3 17h6" /></svg>
      </div>
      <button aria-label="任务视图" className={`${slot} w-12`}>
        <svg viewBox="0 0 18 16" className="h-4 w-[18px]" fill="none" stroke="#fff"><path d="M1 .5v3h11v-3M1 16v-3h11v3M1.500 5.500h10v5h-10zM15.500 0v4m0 2v10" /></svg>
      </button>
      <button aria-label="风扇" className={`${slot} w-[52px]`}>
        <svg viewBox="0 0 22 22" className="size-6" fill="#e4e4e4">
          <path d="M10.500 10.500V7.500Q10.500 1 5.500 1T1 5.500 5.500 9q3 0 5 1.500zM11.500 10.500h3Q21 10.500 21 5.500T16.500 1 13 5.500q0 3-1.500 5zM11.500 11.500v3q0 6.500 5 6.500t4.500-4.500-4.500-3.500q-3 0-5-1.500zM10.500 11.500h-3Q1 11.500 1 16.500T5.500 21 9 16.500q0-3 1.500-5z" />
          <path d="M4 5q3 0 6.500 5M17 4q0 3-5.500 6.500M18 17q-3 0-6.500-5.500M5 18q0-3 5.500-6.500" fill="none" stroke="#06171c" strokeWidth="1.200" />
        </svg>
      </button>
      <button aria-label="浏览器" className={`${slot} w-[52px]`}>
        <svg viewBox="0 0 24 24" className="size-6" fill="none" stroke="#eee"><path d="M5 12.500h14.500c0-10-14-9.500-14 0 0 8.500 11 8.500 13.500 3" strokeWidth="3.500" /><path d="M19 4c5-4 5 1 2 5M7 7C1 14 0 22 3 22s5-2 7-4" strokeWidth="1.800" /></svg>
      </button>
      <button aria-label="广联达通知" className={`${slot} w-[52px]`}>
        <svg viewBox="0 0 28 28" className="size-7" fill="none"><path d="M19 9C11 3 2 8 3 16s12 11 17 4v-5h-6" stroke="#ccc" strokeWidth="2.200" /><path d="M16 12c-6-2-8 2-6 5s5 3 8 1" stroke="#aaa" strokeWidth="1.500" /><path d="M20 1c4 0 3 5 5 9h2v2H14v-2h1c2-4 1-9 5-9zM18 13h4l-2 2z" fill="#e0a000" /></svg>
      </button>
      <span className="mx-[5px] h-3.5 w-1 border-x border-[#555]" />
      <button aria-label="广联达" className={`${slot} ml-3 mr-1 w-10 border-b-2 border-[#76b9ed]`}>
        <svg viewBox="0 0 24 24" className="size-6" fill="none" stroke="#20a0f0" strokeWidth="4.500"><path d="M21 4C11 1 3 6 3.500 13s11 10 15.500 4v-4h-6" /></svg>
      </button>
      <button aria-label="钢筋算量" className={`${slot} w-[47px] border-b-2 border-[#76b9ed] bg-[#38464c]`}><Icon name="app" className="size-6" /></button>
      <button aria-label="记事" className={`${slot} mx-1 w-10 border-b-2 border-[#76b9ed]`}>
        <svg viewBox="0 0 24 24" className="size-6"><rect x="1" y="1" width="22" height="22" rx="2" fill="#f08c10" /><path d="M4 4h13l3 16H6z" fill="#fff4d8" /><path d="M7 8h7M7 11h6M8 14h5" stroke="#b08040" /><path d="m11 16 1-4 8-8 3 2-8 9z" fill="#f4c430" stroke="#7a4a10" /></svg>
      </button>
      <button aria-label="帮助文档" className={`${slot} ml-1 w-10 border-b-2 border-[#76b9ed]`}>
        <svg viewBox="0 0 24 24" className="size-6"><path d="M4 10h8v12H4z" fill="#eee" /><path d="M6 13h5M6 16h5M6 19h5" stroke="#666" /><path d="M10 7c0-6 9-6 9-1 0 3-4 3-4 7M15 15v3" fill="none" stroke="#f8e800" strokeWidth="3" /></svg>
      </button>
      <div className="ml-[23px] flex h-full w-4 flex-col items-center justify-between bg-[#e8e8e8] py-1 text-[#555]"><Chevron dir="up" /><Chevron dir="down" /></div>
      <span className="ml-3 mr-2.5 h-3.5 w-1 border-x border-[#555]" />
      <span>链接</span>
      <div className="flex h-full flex-1 items-center justify-end gap-2 pr-4">
        <svg viewBox="0 0 18 18" className="mr-auto ml-5 size-[18px]" fill="none" stroke="#eee" strokeWidth="1.300"><circle cx="6" cy="7" r="3" /><path d="M1 16c0-7 9-7 10 0" /><circle cx="12.500" cy="4" r="2.500" /><path d="M10 8c3-2 6 0 6.500 3" /></svg>
        <span className="mr-3 text-center leading-[17px]">38%<br />CPU使用</span>
        <svg viewBox="0 0 12 8" className="h-2 w-3" fill="none" stroke="#eee" strokeWidth="1.300"><path d="m1 7 5-5.500L11 7" /></svg>
        <svg viewBox="0 0 16 16" className="size-4" fill="#fff"><path d="M8 1c4 0 4 5 4.500 8l2 3h-13l2-3C4 6 4 1 8 1zM6 13h4l-2 2z" /></svg>
        <svg viewBox="0 0 16 16" className="size-4" fill="none" stroke="#eee"><path d="M5.500 4.500h9v7h-9M2 2v4h4V2M4 6v7h3M3 0v2m2-2v2" /></svg>
        <svg viewBox="0 0 16 16" className="size-4" fill="none" stroke="#ccc"><path d="M2 14C3 7 7 3 14 3M5 14c1-5 4-8 9-8M8 14c0-3 3-5 6-5M11 14c0-1 1-2 3-2" /></svg>
        <svg viewBox="0 0 16 16" className="size-4" fill="none" stroke="#eee"><path d="M1 6h2.500L7 3v10l-3.500-3H1zM9 6q1.500 2 0 4M11 4q3 4 0 8M13 2q5 6 0 12" /></svg>
        <svg viewBox="0 0 22 14" className="h-3.5 w-[22px]" fill="none" stroke="#eee"><path d="M.5.5h21v13H.5z" /><path d="M3 4h16M3 7h16" strokeDasharray="2 1" /><path d="M5 10.500h12" /></svg>
        <span className="ml-1">中</span>
        <Icon name="sogou" className="ml-1.5 size-4" />
        <span className="ml-2 text-center leading-[19px]">16:48<br />2018/9/13</span>
        <svg viewBox="0 0 24 24" className="ml-3.5 size-6"><path d="M2 4h16v13h-8l-3 3v-3H2z" fill="#fff" /><path d="M5 8h10M5 11h10" stroke="#222" /><circle cx="17" cy="17" r="6.500" fill="#555" stroke="#999" /><text x="14" y="21" fontSize="11" fill="#fff" fontFamily="Open Sans, sans-serif">1</text></svg>
      </div>
    </div>
  );
}

function InputMethodBar() {
  const s = { fill: "none", stroke: "#1c74c8", strokeWidth: 1.8 };
  return (
    <div className="absolute right-[142px] top-3 flex h-6 items-center gap-1.5 border border-[#a8c4e0] bg-[#f4f8fc] pl-8 pr-1">
      <Icon name="sogou" className="absolute -left-1 -top-1 size-7" />
      <span className="text-[15px] font-bold text-[#1c74c8]">中</span>
      <svg viewBox="0 0 16 16" className="size-4" {...s}><circle cx="4" cy="5" r="2" /><path d="M11 8.500q1 3-2 5" strokeWidth="3" /></svg>
      <svg viewBox="0 0 16 16" className="size-4" {...s}><circle cx="8" cy="8" r="7" /><path d="M5.500 5v2m5-2v2M4.500 9.500q3.500 4 7 0" /></svg>
      <svg viewBox="0 0 16 16" className="size-4" {...s}><rect x="6" y="2" width="4" height="7" rx="2" fill="#1c74c8" /><path d="M3 7c0 6 10 6 10 0M8 12v3M5 15h6" /></svg>
      <svg viewBox="0 0 16 16" className="size-4" {...s}><path d="M1 3h14v10H1z" /><path d="M3 6h10M3 8.500h10" strokeDasharray="1.500 1" /><path d="M4 11h8" /></svg>
      <svg viewBox="0 0 16 16" className="size-4" fill="#b4c0d4"><circle cx="6" cy="3.500" r="3" /><path d="M0 14c0-9 11-9 11 0z" /><rect x="6" y="8" width="10" height="7" fill="#a0aec8" /><path d="M8 9.500h2.500v2H8v2h2.500M14.500 9.500H12v2h2.500v2H12" fill="none" stroke="#fff" strokeWidth=".9" /></svg>
      <svg viewBox="0 0 16 16" className="size-4" fill="#1c74c8"><path d="M1 3 5 1.500q3 2.500 6 0L15 3v4h-3v8H4V7H1z" /></svg>
      <svg viewBox="0 0 16 16" className="size-4" fill="none" stroke="#1c74c8"><path d="m2 14 7-7" strokeWidth="3" /><path d="M12 1c-4 0-5 4-3 6s6 1 6-3l-3 2-2-2z" fill="#1c74c8" /></svg>
    </div>
  );
}

export default function App() {
  return (
    <div className="relative flex h-screen min-h-[700px] flex-col overflow-hidden bg-[#f0f0f0] text-xs text-black [font-family:'Open_Sans','Noto_Sans_CJK_SC',sans-serif]">
      <svg className="absolute size-0" aria-hidden="true">
        <defs>
          <linearGradient id="gold" x2="1" y2="1"><stop stopColor="#fff0b0" /><stop offset="1" stopColor="#d89c20" /></linearGradient>
          <linearGradient id="blue"><stop stopColor="#9cc8fa" /><stop offset="1" stopColor="#2860c0" /></linearGradient>
          <linearGradient id="blue2" x2="1" y2="1"><stop stopColor="#f4f8ff" /><stop offset="1" stopColor="#6ca0f0" /></linearGradient>
        </defs>
      </svg>
      <TitleBar />
      <MenuBar />
      <MainTools />
      <main className="flex min-h-0 flex-1 pb-[3px] pt-px">
        <NavPanel />
        <div className="ml-1 flex min-w-0 flex-1 flex-col">
          <MemberTools />
          <div className="flex min-h-0 flex-1 gap-0.5 pt-px">
            <MemberPanel />
            <PropertyPanel />
          </div>
        </div>
      </main>
      <StatusBar />
      <Taskbar />
      <SectionDialog />
      <InputMethodBar />
      <span className="absolute left-[463px] -top-[26px] flex size-[45px] items-end justify-center rounded-full border-2 border-[#7a9a80] bg-[#28b848] text-xs font-bold text-white shadow-md">75</span>
      <svg viewBox="0 0 130 224" className="pointer-events-none absolute left-[524px] top-[126px] h-[224px] w-[130px]" aria-hidden="true">
        <ellipse cx="65" cy="112" rx="60" ry="107" fill="none" stroke="#f00" strokeWidth="8" />
      </svg>
    </div>
  );
}
